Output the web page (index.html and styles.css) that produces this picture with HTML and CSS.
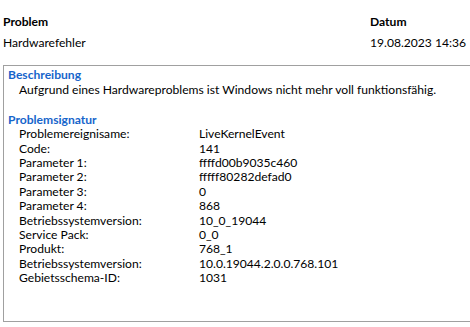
FILE: index.html
```html
<!DOCTYPE html>
<html lang="de">
<head>
  <meta charset="UTF-8">
  <title>Problemdetails</title>
  <link rel="stylesheet" href="styles.css">
</head>
<body>
  <div class="report">
    <div class="summary">
      <div class="summary-col">
        <div class="col-title">Problem</div>
        <div class="col-value">Hardwarefehler</div>
      </div>
      <div class="summary-col date-col">
        <div class="col-title">Datum</div>
        <div class="col-value">19.08.2023 14:36</div>
      </div>
    </div>

    <div class="details">
      <div class="section-title">Beschreibung</div>
      <p class="description">Aufgrund eines Hardwareproblems ist Windows nicht mehr voll funktionsfähig.</p>

      <div class="section-title">Problemsignatur</div>
      <div class="signature">
        <span>Problemereignisame:</span><span>LiveKernelEvent</span>
        <span>Code:</span><span>141</span>
        <span>Parameter 1:</span><span>ffffd00b9035c460</span>
        <span>Parameter 2:</span><span>fffff80282defad0</span>
        <span>Parameter 3:</span><span>0</span>
        <span>Parameter 4:</span><span>868</span>
        <span>Betriebssystemversion:</span><span>10_0_19044</span>
        <span>Service Pack:</span><span>0_0</span>
        <span>Produkt:</span><span>768_1</span>
        <span>Betriebssystemversion:</span><span>10.0.19044.2.0.0.768.101</span>
        <span>Gebietsschema-ID:</span><span>1031</span>
      </div>
    </div>
  </div>
</body>
</html>
```

FILE: styles.css
```css
body {
  margin: 0;
  background-color: #ffffff;
  font-family: Lato, "Noto Sans", sans-serif;
  font-size: 12.1px;
  color: #000000;
}

.report {
  padding: 14px 0 0 3px;
}

.summary {
  display: flex;
  height: 51px;
}

.summary-col {
  width: 367px;
}

.date-col {
  width: auto;
}

.col-title {
  font-weight: bold;
  line-height: 15px;
  margin-bottom: 6px;
}

.col-value {
  line-height: 15px;
}

.details {
  height: 253px;
  border: 1px solid #a0a0a0;
  border-right: none;
  padding: 2px 0 0 4px;
}

.section-title {
  color: #1665cb;
  font-weight: bold;
  line-height: 14.4px;
}

.description {
  margin: 1px 0 15px 11px;
  line-height: 14.4px;
}

.signature {
  display: grid;
  grid-template-columns: 180px auto;
  justify-content: start;
  padding-left: 11px;
  line-height: 14.4px;
}
```
